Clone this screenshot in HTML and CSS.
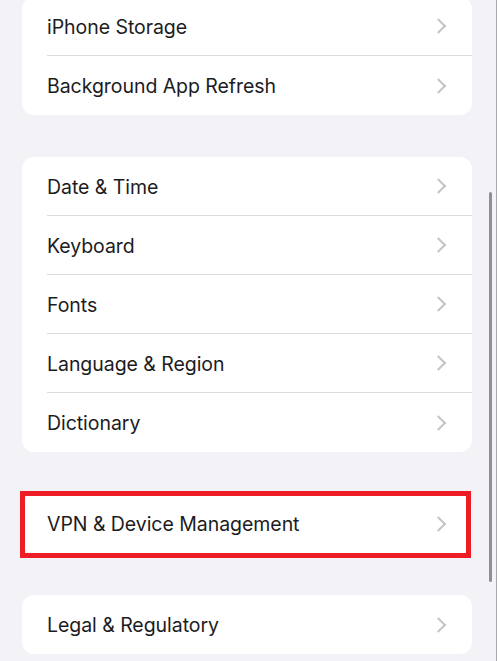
FILE: index.html
```html
<!DOCTYPE html>
<html lang="en">
<head>
  <meta charset="UTF-8" />
  <meta name="viewport" content="width=device-width, initial-scale=1.0"/>
  <title>General</title>
  <link rel="stylesheet" href="styles.css">
</head>
<body>
  <main class="settings">
    <ul class="group group-first">
      <li class="row"><span class="label">iPhone Storage</span><span class="chevron"></span></li>
      <li class="row"><span class="label">Background App Refresh</span><span class="chevron"></span></li>
    </ul>

    <ul class="group">
      <li class="row"><span class="label">Date &amp; Time</span><span class="chevron"></span></li>
      <li class="row"><span class="label">Keyboard</span><span class="chevron"></span></li>
      <li class="row"><span class="label">Fonts</span><span class="chevron"></span></li>
      <li class="row"><span class="label">Language &amp; Region</span><span class="chevron"></span></li>
      <li class="row"><span class="label">Dictionary</span><span class="chevron"></span></li>
    </ul>

    <ul class="group highlighted">
      <li class="row"><span class="label">VPN &amp; Device Management</span><span class="chevron"></span></li>
    </ul>

    <ul class="group">
      <li class="row"><span class="label">Legal &amp; Regulatory</span><span class="chevron"></span></li>
    </ul>
  </main>

  <div class="scroll-thumb"></div>
</body>
</html>
```

FILE: styles.css
```css
html {
  background: #f2f2f7;
  height: 100%;
  border-right: 1px solid #a8a8ac;
  box-sizing: border-box;
}

body {
  font-family: 'Inter', 'Noto Sans', sans-serif;
  margin: 0;
  overflow: hidden;
  color: #1c1c1e;
}

.settings {
  display: flex;
  flex-direction: column;
  gap: 42px;
  padding: 0 24px 0 22px;
}

.group {
  list-style: none;
  margin: 0;
  padding: 0;
  width: 450px;
  background: #fff;
  border-radius: 12px;
}

.group-first {
  margin-top: -3px;
}

.row {
  display: flex;
  align-items: center;
  height: 59px;
  padding-left: 25px;
}

.label {
  flex: 1;
  display: flex;
  align-items: center;
  height: 100%;
  font-size: 19.5px;
  letter-spacing: -0.05px;
  border-bottom: 1px solid #dcdce0;
  box-sizing: border-box;
  padding-top: 1px;
}

.row:last-child .label {
  border-bottom: none;
}

/* chevron sits on the separator line's far end */
.chevron {
  height: 100%;
  width: 50px;
  border-bottom: 1px solid #dcdce0;
  box-sizing: border-box;
  position: relative;
}

.row:last-child .chevron {
  border-bottom: none;
}

.chevron::before {
  content: "";
  position: absolute;
  left: 11px;
  top: 50%;
  width: 9px;
  height: 9px;
  border-top: 2px solid #c4c4c7;
  border-right: 2px solid #c4c4c7;
  transform: translateY(-50%) rotate(45deg);
}

.highlighted {
  position: relative;
}

.highlighted::after {
  content: "";
  position: absolute;
  top: -3px;
  left: -2px;
  right: 1px;
  bottom: -5px;
  border: 5px solid #ed1c25;
  pointer-events: none;
}

.scroll-thumb {
  position: fixed;
  left: 489px;
  top: 192px;
  width: 3px;
  height: 390px;
  background: #909094;
  border-radius: 2px;
}
```
